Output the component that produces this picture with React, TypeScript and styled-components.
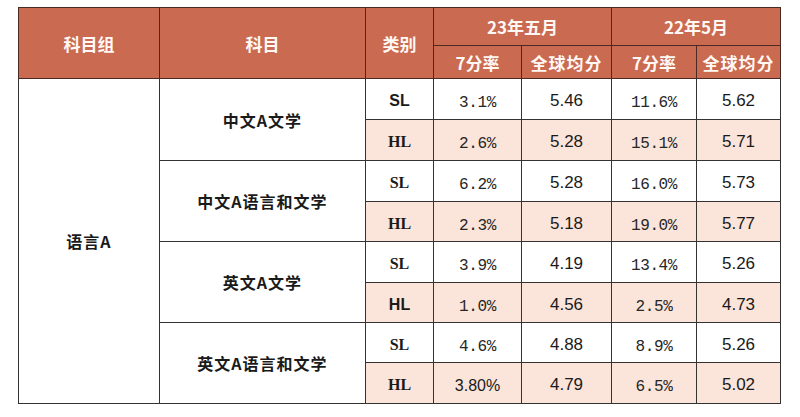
import React from "react";
import styled, { createGlobalStyle, css } from "styled-components";

const Global = createGlobalStyle`
  html, body { margin: 0; padding: 0; background: #ffffff; }
  body { font-family: "Noto Sans CJK SC", "Liberation Sans", sans-serif; }
`;

const Page = styled.div`
  width: 800px;
  height: 417px;
  padding: 7px 0 0 18px;
  box-sizing: border-box;
  background: #fff;
`;

const Table = styled.table`
  border-collapse: collapse;
  table-layout: fixed;
  width: 762px;
  border: 1px solid #2e2e2e;
`;

const HeadRow = styled.tr<{ $h: number }>`
  height: ${(p) => p.$h}px;
`;

const Th = styled.th<{ $spacing?: number }>`
  background: #c96a51;
  color: #fff8f4;
  border: 1px solid #4a2a22;
  font-family: "Noto Sans CJK SC", sans-serif;
  font-weight: 700;
  font-size: 17px;
  letter-spacing: ${(p) => p.$spacing ?? 0}px;
  padding: 0;
  text-align: center;
  vertical-align: middle;
`;

const BodyRow = styled.tr<{ $h: number }>`
  height: ${(p) => p.$h}px;
`;

const Td = styled.td<{ $pink?: boolean }>`
  border: 1px solid #333;
  padding: 0;
  text-align: center;
  vertical-align: middle;
  color: #1a1a1a;
  background: ${(p) => (p.$pink ? "#fbe4d9" : "#ffffff")};
`;

const CnText = styled.span`
  font-family: "Noto Sans CJK SC", sans-serif;
  font-weight: 700;
  font-size: 16px;
  letter-spacing: 1px;
`;

const Level = styled.span<{ $sans?: boolean }>`
  font-weight: 700;
  font-size: 16px;
  ${(p) =>
    p.$sans
      ? css`font-family: "Liberation Sans", Arial, sans-serif;`
      : css`font-family: "Liberation Serif", "Times New Roman", serif;`}
`;

const Pct = styled.span<{ $sans?: boolean }>`
  ${(p) =>
    p.$sans
      ? css`
          font-family: "Liberation Sans", Arial, sans-serif;
          font-size: 16px;
        `
      : css`
          font-family: "Liberation Mono", "DejaVu Sans Mono", monospace;
          font-size: 16px;
          letter-spacing: -0.4px;
          color: #262626;
        `}
  position: relative;
  top: 1px;
`;

const Avg = styled.span`
  font-family: "Liberation Sans", Arial, sans-serif;
  font-size: 17px;
`;

type Row = {
  level: "SL" | "HL";
  levelSans?: boolean;
  p23: string;
  p23Sans?: boolean;
  a23: string;
  p22: string;
  a22: string;
};

const subjects: { name: string; rows: [Row, Row]; heights: [number, number] }[] = [
  {
    name: "中文A文学",
    heights: [41, 41],
    rows: [
      { level: "SL", levelSans: true, p23: "3.1%", a23: "5.46", p22: "11.6%", a22: "5.62" },
      { level: "HL", p23: "2.6%", a23: "5.28", p22: "15.1%", a22: "5.71" },
    ],
  },
  {
    name: "中文A语言和文学",
    heights: [41, 40],
    rows: [
      { level: "SL", p23: "6.2%", a23: "5.28", p22: "16.0%", a22: "5.73" },
      { level: "HL", p23: "2.3%", a23: "5.18", p22: "19.0%", a22: "5.77" },
    ],
  },
  {
    name: "英文A文学",
    heights: [41, 40],
    rows: [
      { level: "SL", p23: "3.9%", a23: "4.19", p22: "13.4%", a22: "5.26" },
      { level: "HL", levelSans: true, p23: "1.0%", a23: "4.56", p22: "2.5%", a22: "4.73" },
    ],
  },
  {
    name: "英文A语言和文学",
    heights: [40, 41],
    rows: [
      { level: "SL", p23: "4.6%", a23: "4.88", p22: "8.9%", a22: "5.26" },
      { level: "HL", p23: "3.80%", p23Sans: true, a23: "4.79", p22: "6.5%", a22: "5.02" },
    ],
  },
];

export default function App() {
  return (
    <>
      <Global />
      <Page>
        <Table>
          <colgroup>
            <col style={{ width: 141 }} />
            <col style={{ width: 206 }} />
            <col style={{ width: 68 }} />
            <col style={{ width: 88 }} />
            <col style={{ width: 90 }} />
            <col style={{ width: 85 }} />
            <col style={{ width: 84 }} />
          </colgroup>
          <thead>
            <HeadRow $h={38}>
              <Th rowSpan={2}>科目组</Th>
              <Th rowSpan={2}>科目</Th>
              <Th rowSpan={2}>类别</Th>
              <Th colSpan={2}>23年五月</Th>
              <Th colSpan={2}>22年5月</Th>
            </HeadRow>
            <HeadRow $h={33}>
              <Th>7分率</Th>
              <Th $spacing={1}>全球均分</Th>
              <Th>7分率</Th>
              <Th $spacing={1}>全球均分</Th>
            </HeadRow>
          </thead>
          <tbody>
            {subjects.map((s, si) =>
              s.rows.map((r, ri) => {
                const pink = r.level === "HL";
                return (
                  <BodyRow key={`${si}-${ri}`} $h={s.heights[ri]}>
                    {si === 0 && ri === 0 && (
                      <Td rowSpan={8}>
                        <CnText>语言A</CnText>
                      </Td>
                    )}
                    {ri === 0 && (
                      <Td rowSpan={2}>
                        <CnText>{s.name}</CnText>
                      </Td>
                    )}
                    <Td $pink={pink}>
                      <Level $sans={r.levelSans}>{r.level}</Level>
                    </Td>
                    <Td $pink={pink}>
                      <Pct $sans={r.p23Sans}>{r.p23}</Pct>
                    </Td>
                    <Td $pink={pink}>
                      <Avg>{r.a23}</Avg>
                    </Td>
                    <Td $pink={pink}>
                      <Pct>{r.p22}</Pct>
                    </Td>
                    <Td $pink={pink}>
                      <Avg>{r.a22}</Avg>
                    </Td>
                  </BodyRow>
                );
              })
            )}
          </tbody>
        </Table>
      </Page>
    </>
  );
}
